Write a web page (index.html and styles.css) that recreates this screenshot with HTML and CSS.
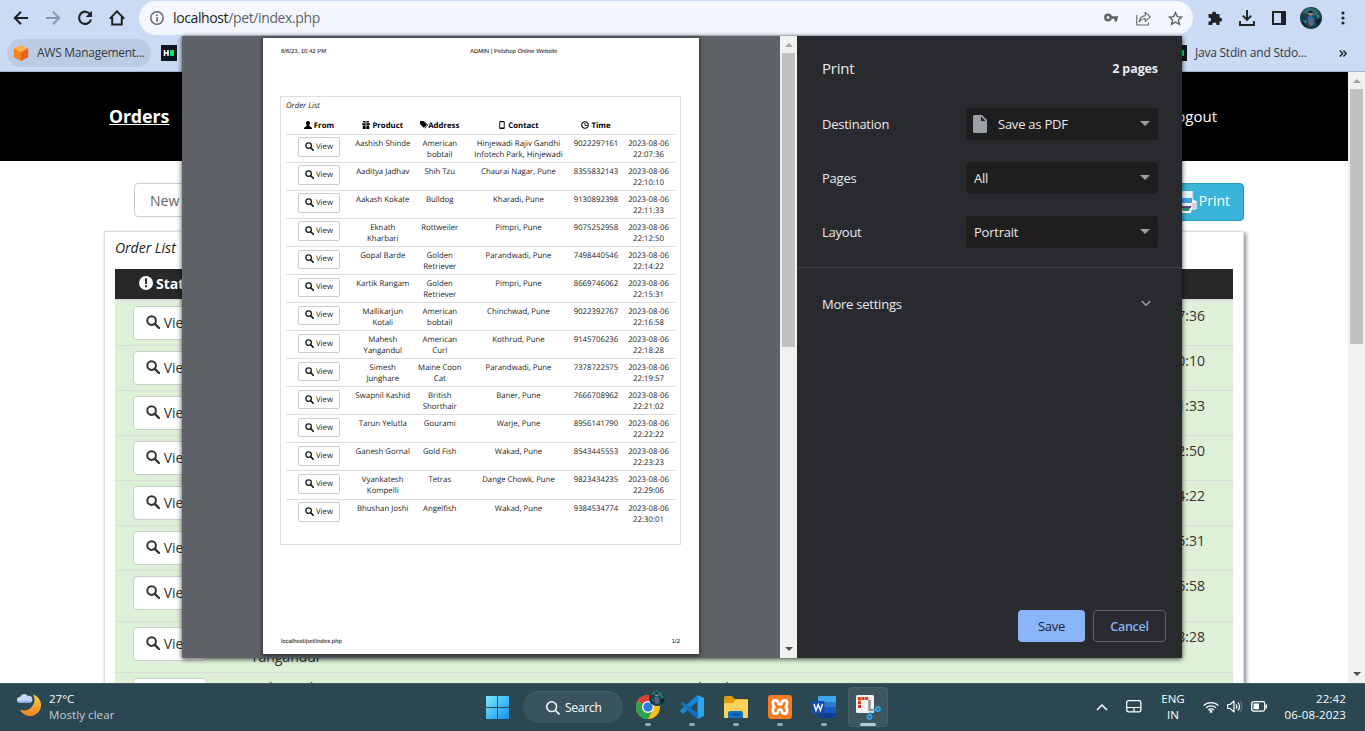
FILE: index.html
```html
<!DOCTYPE html>
<html lang="en">
<head>
<meta charset="utf-8">
<title>ADMIN | Petshop Online Website</title>
<link rel="stylesheet" href="styles.css">
</head>
<body>
<svg width="0" height="0" class="defs">
  <symbol id="mag" viewBox="0 0 14 14"><circle cx="5.6" cy="5.6" r="4.3" fill="none" stroke="currentColor" stroke-width="2"/><path d="M8.8 8.8l4.2 4.2" stroke="currentColor" stroke-width="2.4" stroke-linecap="round"/></symbol>
  <symbol id="avatar" viewBox="0 0 22 22"><circle cx="11" cy="11" r="11" fill="#173f49"/><path d="M2 6q5-6 9-5 6 1 8 5l-5 3-5-2z" fill="#2d6d72"/><path d="M2 15q3-3 5-1l-2 4zM16 6l4 3-3 3z" fill="#3d8583"/><circle cx="10.5" cy="6.5" r="2.400" fill="#a08273"/><path d="M8 5q2.500-3 5 0v1H8z" fill="#101d25"/><path d="M7.500 10l3-1.500 3.500 2 .5 8H8.500z" fill="#2a6fa3"/><path d="M9 11l2 8M14 12l-3 4" stroke="#b04b4e" stroke-width="1.100"/><path d="M1 14q4-1 5 6-4-2-5-6zM16 13l5-1q-1 5-4 7z" fill="#0b242c"/></symbol>
</svg>
<div class="screen">
  <header class="toolbar">
    <svg class="nav-ico" viewBox="0 0 16 16"><path d="M15 8H2M8 1.800L1.800 8 8 14.200" fill="none" stroke="#202124" stroke-width="2"/></svg>
    <svg class="nav-ico" viewBox="0 0 16 16"><path d="M1 8h13M8 1.800L14.200 8 8 14.200" fill="none" stroke="#8d97a8" stroke-width="2"/></svg>
    <svg class="nav-ico" viewBox="0 0 16 16"><path d="M13.300 4.500A6.100 6.100 0 1 0 14 9.500" fill="none" stroke="#202124" stroke-width="2.100"/><path d="M15 .8v6.300H8.700z" fill="#202124"/></svg>
    <svg class="nav-ico" viewBox="0 0 16 16"><path d="M3.200 7v7.600h9.600V7M.8 8.600L8 1.400l7.200 7.200" fill="none" stroke="#202124" stroke-width="2"/></svg>
    <div class="omnibox">
      <svg class="info" viewBox="0 0 14 14"><circle cx="7" cy="7" r="6.200" fill="none" stroke="#5f6368" stroke-width="1.400"/><path d="M7 6.200v4.300M7 3.400V5" stroke="#5f6368" stroke-width="1.600"/></svg>
      <span class="url">localhost<span>/pet/index.php</span></span>
      <svg class="key" viewBox="0 0 14 10"><circle cx="4" cy="4.500" r="2.700" fill="none" stroke="#5f6368" stroke-width="2.400"/><path d="M7 4.500h7M11.800 4.500v4" stroke="#5f6368" stroke-width="2.600"/></svg>
      <svg class="share" viewBox="0 0 15 15"><path d="M.8 4v10h11.700V11.500" fill="none" stroke="#5f6368" stroke-width="1.100"/><path d="M3.200 11c.3-4 2.500-6.100 6-6.300V1.300L14.300 5.800 9.200 10.300V7.500C6.500 7.500 4.700 8.700 3.200 11z" fill="none" stroke="#5f6368" stroke-width="1.100" stroke-linejoin="round"/></svg>
      <svg class="star" viewBox="0 0 15 15"><path d="M7.500 1.500l1.800 4.100 4.500.4-3.400 3 1 4.400-3.900-2.300-3.900 2.300 1-4.400-3.400-3 4.500-.4z" fill="none" stroke="#5f6368" stroke-width="1.400"/></svg>
    </div>
    <div class="actions">
      <svg width="16" height="16" viewBox="0 0 16 16"><path d="M1.500 4h3.700a2 2 0 1 1 3.800 0H12.500v3.700a2 2 0 1 1 0 3.800V15H9.300a2 2 0 1 0-3.900 0H1.500v-3.500a2 2 0 1 0 0-3.800z" fill="#202124"/></svg>
      <svg width="16" height="16" viewBox="0 0 16 16"><path d="M8 0v9M3.800 5.600L8 9.800l4.200-4.200M1 11v4h14v-4" fill="none" stroke="#202124" stroke-width="1.900"/></svg>
      <svg width="14" height="14" viewBox="0 0 14 14"><path d="M1 1h12v12H1z" fill="none" stroke="#202124" stroke-width="2"/><path d="M9 1h4v12H9z" fill="#202124"/></svg>
      <svg width="22" height="22"><use href="#avatar"/></svg>
      <svg width="4" height="14" viewBox="0 0 4 14"><g fill="#202124"><circle cx="2" cy="2" r="1.600"/><circle cx="2" cy="7" r="1.600"/><circle cx="2" cy="12" r="1.600"/></g></svg>
    </div>
  </header>
  <nav class="bookmarks">
    <div class="chip"><svg width="16" height="16" viewBox="0 0 16 16"><path d="M8 0l7.200 3.600L8 7.200.8 3.600z" fill="#ffab4c"/><path d="M.8 3.600L8 7.200V16L.8 12.300z" fill="#f7831c"/><path d="M15.200 3.600L8 7.200V16l7.200-3.700z" fill="#e8601b"/></svg><span>AWS Management...</span></div>
    <svg class="hr" viewBox="0 0 16 16"><path d="M0 0h16v16H0z" fill="#0e141e"/><path d="M3.500 5v6M7 5v6M3.500 8H7" stroke="#fff" stroke-width="1.600"/><path d="M9 5h4v6H9z" fill="#00ea64"/></svg>
    <svg class="hr hr-right" viewBox="0 0 16 16"><path d="M0 0h16v16H0z" fill="#0e141e"/><path d="M9 5h4v6H9z" fill="#00ea64"/></svg>
    <span class="java">Java Stdin and Stdo...</span>
    <svg class="more" viewBox="0 0 8 7"><path d="M.8.6l2.800 2.900L.8 6.400M4.400.6l2.800 2.900-2.800 2.900" fill="none" stroke="#202124" stroke-width="1.500"/></svg>
  </nav>

  <div class="viewport">
    <main class="site">
      <div class="site-nav"><b>Orders</b><span>Logout</span></div>
      <div class="tools">
        <div class="filter">New</div>
        <div class="print-btn"><svg width="24" height="24" viewBox="0 0 24 24"><path d="M5 1h15v9H5z" fill="#e8f2fb"/><path d="M20 1v9" stroke="#a9bfd6"/><path d="M6 8h13v5H6z" fill="#3b9df5"/><path d="M1 13h18V9l4 2q1 .5 1 2v5q0 1-1.500 1.500L19 20H1z" fill="#f3f3fb"/><path d="M19 13v7l4-1.500q1-.5 1-1.500v-4z" fill="#cfd0e6"/><path d="M5 16h13v3H5z" fill="#54467a"/><path d="M6 18h13l-1 5H7z" fill="#fff"/><path d="M9 18h8l-1 3h-6z" fill="#2e9278"/></svg><span>Print</span></div>
      </div>
      <section class="orders">
        <i>Order List</i>
        <div class="o-head"><svg width="14" height="14" viewBox="0 0 14 14"><circle cx="7" cy="7" r="7" fill="#fff"/><path d="M5.800 2.500h2.400L7.800 8H6.200zM6 9.200h2v2H6z" fill="#282828"/></svg>Status</div>
        <div class="o-row"><span><a class="btn"><svg><use href="#mag"/></svg>View</a></span><span>Aashish Shinde</span><span>American bobtail</span><span>Hinjewadi Rajiv Gandhi</span><span>9022297161</span><span>2023-08-06 22:07:36</span></div>
        <div class="o-row"><span><a class="btn"><svg><use href="#mag"/></svg>View</a></span><span>Aaditya Jadhav</span><span>Shih Tzu</span><span>Chaurai Nagar, Pune</span><span>8355832143</span><span>2023-08-06 22:10:10</span></div>
        <div class="o-row"><span><a class="btn"><svg><use href="#mag"/></svg>View</a></span><span>Aakash Kokate</span><span>Bulldog</span><span>Kharadi, Pune</span><span>9130892398</span><span>2023-08-06 22:11:33</span></div>
        <div class="o-row"><span><a class="btn"><svg><use href="#mag"/></svg>View</a></span><span>Eknath Kharbari</span><span>Rottweiler</span><span>Pimpri, Pune</span><span>9075252958</span><span>2023-08-06 22:12:50</span></div>
        <div class="o-row"><span><a class="btn"><svg><use href="#mag"/></svg>View</a></span><span>Gopal Barde</span><span>Golden Retriever</span><span>Parandwadi, Pune</span><span>7498440546</span><span>2023-08-06 22:14:22</span></div>
        <div class="o-row"><span><a class="btn"><svg><use href="#mag"/></svg>View</a></span><span>Kartik Rangam</span><span>Golden Retriever</span><span>Pimpri, Pune</span><span>8669746062</span><span>2023-08-06 22:15:31</span></div>
        <div class="o-row"><span><a class="btn"><svg><use href="#mag"/></svg>View</a></span><span>Mallikarjun<br>Kotali</span><span>American bobtail</span><span>Chinchwad, Pune</span><span>9022392767</span><span>2023-08-06 22:16:58</span></div>
        <div class="o-row"><span><a class="btn"><svg><use href="#mag"/></svg>View</a></span><span>Mahesh<br>Yangandul</span><span>American Curl</span><span>Kothrud, Pune</span><span>9145706236</span><span>2023-08-06 22:18:28</span></div>
        <div class="o-row"><span><a class="btn"><svg><use href="#mag"/></svg>View</a></span><span>Simesh Junghare</span><span>Maine Coon Cat</span><span>Parandwadi, Pune</span><span>7378722575</span><span>2023-08-06 22:19:57</span></div>
      </section>
    </main>
    <div class="scroll page-scroll"><i class="up"></i><b></b><i class="down"></i></div>
  </div>

  <footer class="taskbar">
    <div class="weather">
      <svg width="24" height="24" viewBox="0 0 24 24"><defs><linearGradient id="mg" x2="0" y2="1"><stop stop-color="#f8cf47"/><stop offset="1" stop-color="#ee8420"/></linearGradient></defs><path d="M16 1.500A11 11 0 1 1 3 16.500 10.500 10.500 0 0 0 16 1.500z" fill="url(#mg)"/><path d="M3 10a3 3 0 0 1 0-6 4.500 4.500 0 0 1 8-1 3.500 3.500 0 0 1 1.500 7z" fill="#c5d8fb"/><path d="M1 8h13q-1 2-2 2H3Q1 10 1 8z" fill="#8fabec"/></svg>
      <div>27°C<br><span>Mostly clear</span></div>
    </div>
    <div class="dock">
      <svg class="start" viewBox="0 0 23 23"><defs><linearGradient id="wg" x2="1" y2="1"><stop stop-color="#7be8fb"/><stop offset="1" stop-color="#1592f2"/></linearGradient></defs><path d="M0 0h11v11H0zM12 0h11v11H12zM0 12h11v11H0zM12 12h11v11H12z" fill="url(#wg)"/></svg>
      <div class="search"><svg width="14" height="14" viewBox="0 0 14 14"><circle cx="5.700" cy="5.700" r="4.900" fill="none" stroke="#fff" stroke-width="1.500"/><path d="M9.200 9.200l4.300 4.300" stroke="#fff" stroke-width="1.600"/></svg>Search</div>
      <div class="apps">
        <div class="app"><svg width="30" height="30" viewBox="0 0 30 30"><circle cx="12" cy="18" r="12" fill="#fbc116"/><path d="M12 18L1.600 12a12 12 0 0 1 20.800 0z" fill="#e33b2e"/><path d="M12 18L1.600 12A12 12 0 0 0 12 30l5-9z" fill="#30a350"/><circle cx="12" cy="18" r="6" fill="#fff"/><circle cx="12" cy="18" r="4.700" fill="#2b7de1"/><svg x="13" y="1" width="16" height="16" viewBox="0 0 22 22"><use href="#avatar" width="22" height="22"/></svg></svg></div>
        <div class="app"><svg width="24" height="24" viewBox="0 0 24 24"><path d="M17.500 0L24 3v18l-6.500 3z" fill="#2fa4ee"/><path d="M17.500 0v6.500L3 19 .4 17v-2z" fill="#1687d4"/><path d="M.4 9L3 6.500 17.500 18v6L.4 9z" fill="#0f72bd"/></svg></div>
        <div class="app"><svg width="24" height="24" viewBox="0 0 24 24"><path d="M0 2.500Q0 1 1.500 1H8l3 3h11.500Q24 4 24 5.500V12H0z" fill="#e09a10"/><path d="M0 8h9l3-3.500h12V22q0 1-1 1H1q-1 0-1-1z" fill="#fcd25a"/><path d="M4 23v-5q0-2 2-2h11q2 0 2 2v5z" fill="#1272c4"/><path d="M8 19.500h7" stroke="#074a86" stroke-width="1.500"/></svg></div>
        <div class="app"><svg width="24" height="24" viewBox="0 0 24 24"><rect width="24" height="24" rx="3" fill="#f57c23"/><g fill="none" stroke-linecap="round"><path d="M7.500 8Q7.500 12 12 12t4.500-4M7.500 16Q7.500 12 12 12t4.500 4" stroke="#fff" stroke-width="8"/><path d="M7.500 8Q8 12 12 12t4.500-4M7.500 16Q8 12 12 12t4.500 4" stroke="#f57c23" stroke-width="2.600"/></g></svg></div>
        <div class="app"><svg width="24" height="24" viewBox="0 0 24 24"><path d="M6 1h18v6H6z" fill="#41a5ee"/><path d="M6 7h18v5.500H6z" fill="#2b7cd3"/><path d="M6 12.500h18V18H6z" fill="#185abd"/><path d="M6 18h18v5H6z" fill="#103f91"/><rect y="6" width="12.500" height="12.500" rx="1" fill="#164fa8"/><path d="M2 9l2 6.500L6.200 9.500l2.200 6L10.500 9" fill="none" stroke="#fff" stroke-width="1.400"/></svg></div>
        <div class="app active"><svg width="26" height="26" viewBox="0 0 26 26"><rect x="1" y="1" width="18" height="18" rx="1.500" fill="#f4f2f1"/><path d="M4.500 14V4.500H14" fill="none" stroke="#d83b13" stroke-width="3" stroke-dasharray="3 .8"/><path d="M14.500 6v10h6" fill="none" stroke="#8c9296" stroke-width="2.400"/><g fill="none" stroke="#2ba3e6" stroke-width="1.800"><circle cx="23" cy="15" r="2"/><circle cx="14.500" cy="23" r="2"/><path d="M19 16.500l2.500-.7M15 21l.5-3"/></g></svg></div>
      </div>
    </div>
    <div class="tray">
      <svg width="12" height="8" viewBox="0 0 12 8"><path d="M1 7l5-5 5 5" fill="none" stroke="#fff" stroke-width="1.500"/></svg>
      <svg class="pad" width="16" height="13" viewBox="0 0 16 13"><rect x=".7" y=".7" width="14.200" height="11.200" rx="1.800" fill="none" stroke="#fff" stroke-width="1.300"/><path d="M1 7.500h14M8 7.500V12" stroke="#fff" stroke-width="1.200"/></svg>
      <div class="lang">ENG<br>IN</div>
      <svg class="wifi" width="16" height="12" viewBox="0 0 16 12"><g fill="none" stroke="#fff" stroke-width="1.200"><path d="M.6 4.600a10.500 10.500 0 0 1 14.800 0M2.900 6.900a7.200 7.200 0 0 1 10.200 0M5.100 9.100a4 4 0 0 1 5.800 0"/></g><circle cx="8" cy="10.500" r="1.400" fill="#fff"/></svg>
      <svg class="vol" width="16" height="13" viewBox="0 0 16 13"><path d="M.7 4.500h2.500L7 1v11L3.200 8.500H.7z" fill="none" stroke="#fff" stroke-width="1.200" stroke-linejoin="round"/><path d="M9 4.300q1.600 2.200 0 4.400M11 2.500q3 4 0 8" fill="none" stroke="#fff" stroke-width="1.200"/><path d="M13 1q4 5.500 0 11" fill="none" stroke="#6b8089"/></svg>
      <svg class="bat" width="17" height="11" viewBox="0 0 17 11"><rect x=".7" y=".7" width="13" height="9.400" rx="1.800" fill="none" stroke="#fff" stroke-width="1.300"/><path d="M2.500 2.500H8v5.800H2.500zM14.500 3.500h1.600v4h-1.600z" fill="#fff"/></svg>
      <div class="clock">22:42<br>06-08-2023</div>
    </div>
  </footer>

  <div class="dialog">
    <div class="preview">
      <div class="paper">
        <div class="p-top"><span>8/6/23, 10:42 PM</span><span>ADMIN | Petshop Online Website</span></div>
        <div class="p-box">
          <i>Order List</i>
          <div class="p-row p-head">
            <span><svg viewBox="0 0 9 9"><path d="M4.500 0c3 0 2.500 4 1.300 5 .2 1.300 3.200 1 3.200 4H0c0-3 3-2.700 3.200-4C2 4 1.500 0 4.500 0z"/></svg> From</span>
            <span><svg viewBox="0 0 9 9"><path d="M.3 2.500h3.800v2H.3zM4.900 2.500h3.800v2H4.900zM.8 5.200h3.300V9H.8zM4.900 5.200h3.300V9H4.900zM1.200 0h2.300l1 1.200L5.500 0h2.300v1.800H1.200z"/></svg> Product</span>
            <span><svg viewBox="0 0 9 9"><path d="M0 0h3.500l4 4.300-3.300 3.400L0 3.500zM4.500 0L9 4.500 5.500 8.300l-.6-.5L8 4.500 3.800 0z"/></svg>Address</span>
            <span><svg viewBox="0 0 9 9"><path d="M2.500 0h4q1 0 1 1v7q0 1-1 1h-4q-1 0-1-1V1q0-1 1-1zm0 1.500v5.800h4V1.500z" fill-rule="evenodd"/></svg> Contact</span>
            <span><svg viewBox="0 0 9 9"><circle cx="4.500" cy="4.500" r="3.700" fill="none" stroke="#000" stroke-width="1.300"/><path d="M4.500 2v3H7" fill="none" stroke="#000"/></svg> Time</span>
          </div>
          <div class="p-row"><span><a><svg><use href="#mag"/></svg>View</a></span><span>Aashish Shinde</span><span>American<br>bobtail</span><span>Hinjewadi Rajiv Gandhi<br>Infotech Park, Hinjewadi</span><span>9022297161</span><span>2023-08-06<br>22:07:36</span></div>
          <div class="p-row"><span><a><svg><use href="#mag"/></svg>View</a></span><span>Aaditya Jadhav</span><span>Shih Tzu</span><span>Chaurai Nagar, Pune</span><span>8355832143</span><span>2023-08-06<br>22:10:10</span></div>
          <div class="p-row"><span><a><svg><use href="#mag"/></svg>View</a></span><span>Aakash Kokate</span><span>Bulldog</span><span>Kharadi, Pune</span><span>9130892398</span><span>2023-08-06<br>22:11:33</span></div>
          <div class="p-row"><span><a><svg><use href="#mag"/></svg>View</a></span><span>Eknath<br>Kharbari</span><span>Rottweiler</span><span>Pimpri, Pune</span><span>9075252958</span><span>2023-08-06<br>22:12:50</span></div>
          <div class="p-row"><span><a><svg><use href="#mag"/></svg>View</a></span><span>Gopal Barde</span><span>Golden<br>Retriever</span><span>Parandwadi, Pune</span><span>7498440546</span><span>2023-08-06<br>22:14:22</span></div>
          <div class="p-row"><span><a><svg><use href="#mag"/></svg>View</a></span><span>Kartik Rangam</span><span>Golden<br>Retriever</span><span>Pimpri, Pune</span><span>8669746062</span><span>2023-08-06<br>22:15:31</span></div>
          <div class="p-row"><span><a><svg><use href="#mag"/></svg>View</a></span><span>Mallikarjun<br>Kotali</span><span>American<br>bobtail</span><span>Chinchwad, Pune</span><span>9022392767</span><span>2023-08-06<br>22:16:58</span></div>
          <div class="p-row"><span><a><svg><use href="#mag"/></svg>View</a></span><span>Mahesh<br>Yangandul</span><span>American<br>Curl</span><span>Kothrud, Pune</span><span>9145706236</span><span>2023-08-06<br>22:18:28</span></div>
          <div class="p-row"><span><a><svg><use href="#mag"/></svg>View</a></span><span>Simesh<br>Junghare</span><span>Maine Coon<br>Cat</span><span>Parandwadi, Pune</span><span>7378722575</span><span>2023-08-06<br>22:19:57</span></div>
          <div class="p-row"><span><a><svg><use href="#mag"/></svg>View</a></span><span>Swapnil Kashid</span><span>British<br>Shorthair</span><span>Baner, Pune</span><span>7666708962</span><span>2023-08-06<br>22:21:02</span></div>
          <div class="p-row"><span><a><svg><use href="#mag"/></svg>View</a></span><span>Tarun Yelutla</span><span>Gourami</span><span>Warje, Pune</span><span>8956141790</span><span>2023-08-06<br>22:22:22</span></div>
          <div class="p-row"><span><a><svg><use href="#mag"/></svg>View</a></span><span>Ganesh Gornal</span><span>Gold Fish</span><span>Wakad, Pune</span><span>8543445553</span><span>2023-08-06<br>22:23:23</span></div>
          <div class="p-row"><span><a><svg><use href="#mag"/></svg>View</a></span><span>Vyankatesh<br>Kompelli</span><span>Tetras</span><span>Dange Chowk, Pune</span><span>9823434235</span><span>2023-08-06<br>22:29:06</span></div>
          <div class="p-row"><span><a><svg><use href="#mag"/></svg>View</a></span><span>Bhushan Joshi</span><span>Angelfish</span><span>Wakad, Pune</span><span>9384534774</span><span>2023-08-06<br>22:30:01</span></div>
        </div>
        <div class="p-foot"><span>localhost/pet/index.php</span><span>1/2</span></div>
      </div>
      <div class="scroll prev-scroll"><i class="up"></i><b></b><i class="down"></i></div>
    </div>
    <aside class="panel">
      <div class="title"><h1>Print</h1><b>2 pages</b></div>
      <div class="field"><label>Destination</label><div class="select"><svg width="14" height="18" viewBox="0 0 14 18"><path d="M1.500 0H9l5 5v11.500q0 1.500-1.500 1.500h-11Q0 18 0 16.500v-15Q0 0 1.500 0zM8 1.500V6h4.500z" fill="#9aa0a6" fill-rule="evenodd"/></svg>Save as PDF<i></i></div></div>
      <div class="field"><label>Pages</label><div class="select">All<i></i></div></div>
      <div class="field"><label>Layout</label><div class="select">Portrait<i></i></div></div>
      <div class="settings"><span>More settings</span><svg width="10" height="7" viewBox="0 0 10 7"><path d="M.8 1L5 5.200 9.200 1" fill="none" stroke="#9aa0a6" stroke-width="1.600"/></svg></div>
      <div class="buttons"><div class="save">Save</div><div class="cancel">Cancel</div></div>
    </aside>
  </div>
</div>
</body>
</html>
```
FILE: styles.css
```css
* { box-sizing: border-box; }
body { margin: 0; background: #fff; font-family: "Open Sans", "Noto Sans", sans-serif; }
svg { display: block; flex: none; }
.defs { position: absolute; }
.screen { position: relative; width: 1365px; height: 731px; overflow: hidden; display: flex; flex-direction: column; }

/* browser chrome */
.toolbar { height: 36px; background: #cbdbf5; display: flex; align-items: center; padding-left: 13px; }
.nav-ico { width: 16px; height: 16px; margin-right: 16px; }
.omnibox { width: 1054px; height: 34px; border-radius: 17px; background: #f4f8fe; margin-left: -2px; display: flex; align-items: center; padding: 0 10px 0 11px; }
.info { width: 14px; height: 14px; margin-right: 9px; }
.url { font-size: 14px; color: #202124; letter-spacing: -.38px; padding-bottom: 1px; }
.url span { color: #5f6368; }
.key { width: 14px; height: 10px; margin-left: auto; }
.share { width: 15px; height: 15px; margin-left: 18px; }
.star { width: 15px; height: 15px; margin-left: 17px; }
.actions { display: flex; align-items: center; margin-left: 14px; }
.actions svg + svg { margin-left: 16px; }
.actions svg:nth-child(3) { margin-left: 17px; }
.actions svg:nth-child(4) { margin-left: 14px; }
.actions svg:nth-child(5) { margin-left: 19px; }
.bookmarks { height: 36px; background: #cbdbf5; border-bottom: 1px solid #a6b3cb; display: flex; align-items: center; padding: 0 18px 1px 7px; font-size: 12px; color: #35383d; }
.chip { width: 144px; height: 28px; border-radius: 14px; background: #bccbe4; display: flex; align-items: center; gap: 8px; padding-left: 6px; white-space: nowrap; }
.chip span { letter-spacing: -.27px; padding-bottom: 1px; }
.hr { width: 16px; height: 16px; margin-left: 10px; }
.hr-right { margin-left: 994px; }
.java { margin-left: 8px; white-space: nowrap; letter-spacing: -.23px; padding-bottom: 1px; }
.more { width: 8px; height: 7px; margin-left: auto; }

/* web page */
.viewport { height: 611px; display: flex; background: #fff; }
.site { width: 1348px; height: 611px; overflow: hidden; }
.site-nav { height: 89px; background: #000; color: #fff; display: flex; align-items: center; justify-content: space-between; padding: 0 131px 2px 109px; }
.site-nav b { font: bold 17.8px "Noto Sans", sans-serif; text-decoration: underline; }
.site-nav span { font-size: 15px; font-weight: 500; }
.tools { display: flex; justify-content: space-between; align-items: flex-start; padding: 22px 104px 0 134px; height: 70px; }
.filter { width: 300px; height: 34px; border: 1px solid #ccc; border-radius: 4px; padding: 6px 15px; font-size: 14px; line-height: 22px; color: #666; }
.print-btn { height: 38px; border: 1px solid #269abc; border-radius: 4px; background: #39b3d7; color: #fff; font-size: 14px; display: flex; align-items: center; gap: 2px; padding: 0 13px 0 12px; }
.print-btn span { padding-bottom: 3px; }
.print-btn svg { margin-bottom: 1px; }
.orders { width: 1140px; height: 600px; margin-left: 104px; border: 1px solid #ddd; box-shadow: 2px 2px 4px #888; padding: 6px 10px; font-size: 14px; color: #333; }
.orders > i { display: block; height: 31px; line-height: 20px; color: #222; }
.o-head { height: 30px; background: #282828; color: #fff; font-weight: bold; display: flex; align-items: center; gap: 3px; padding: 0 0 2px 24px; }
.o-row { display: grid; grid-template-columns: 110px 120px 168px 402px 130px 188px; text-align: center; line-height: 20px; background: #dff0d8; border-top: 1px solid #ddd; padding: 5px 0; min-height: 45px; }
.o-head + .o-row { border-top: 2px solid #ddd; min-height: 46px; }
.o-row > span { height: fit-content; min-height: 34px; }
.btn { width: 74px; height: 34px; margin: 0 auto; display: flex; align-items: center; justify-content: center; gap: 4px; background: #fff; border: 1px solid #ccc; border-radius: 4px; }
.btn svg { width: 14px; height: 14px; margin-bottom: 2px; }

/* scrollbars */
.scroll { width: 17px; background: #f1f1f1; display: flex; flex-direction: column; align-items: center; }
.scroll i { width: 0; height: 0; border: 4px solid transparent; }
.scroll .up { border-bottom-color: #a3a3a3; margin-top: 3px; }
.scroll .down { border-top-color: #505050; margin: auto 0 2px; }
.scroll b { width: 13px; background: #c1c1c1; }
.page-scroll b { height: 255px; margin-top: 6px; }
.page-scroll .down { margin-bottom: 3px; }

/* print dialog floats over the window */
.dialog { position: absolute; left: 182px; top: 36px; width: 1000px; height: 622px; display: flex; background: #292a2d; box-shadow: 0 1px 5px rgba(0,0,0,.75); }
.preview { width: 615px; display: flex; background: #5f6367; padding: 2px 0 0 81px; }
.paper { width: 436px; height: 616px; background: #fff; box-shadow: 0 1px 4px 1px rgba(0,0,0,.55); padding: 0 18px 0 17px; text-rendering: geometricPrecision; }
.p-top { height: 58px; padding: 9px 1px 0; display: flex; font: 5.95px/10px "Liberation Sans", sans-serif; color: #000; white-space: nowrap; }
.p-top span:first-child { width: 189px; }
.p-box { height: 449px; border: 1px solid #ddd; padding: 2.5px 5px; font-size: 7.8px; line-height: 11px; color: #1c1c1c; }
.p-box > i { display: block; height: 13px; line-height: 12.500px; }
.p-row { display: grid; grid-template-columns: 66px 61.5px 52.5px 105px 50px 55px; height: 28.08px; border-top: 1px solid #ddd; padding-top: 4px; text-align: center; white-space: nowrap; }
.p-row > span { display: flex; flex-direction: column; align-items: center; }
.p-head { height: 21px; border: 0; padding-top: 8px; font-weight: bold; color: #000; }
.p-head > span { display: flex; flex-direction: row; justify-content: center; align-items: center; gap: 2px; height: 11px; }
.p-head > span:nth-child(3) { gap: 0; }
.p-head svg { width: 8px; height: 8px; margin-bottom: 2.500px; }
.p-row a { width: 42px; height: 19.5px; margin-top: -1.300px; border: 1px solid #ccc; border-radius: 2px; display: flex; align-items: center; justify-content: center; gap: 2px; padding-top: 1px; }
.p-row a svg { width: 9px; height: 9px; margin-bottom: 2px; }
.p-foot { height: 109px; padding: 92px 1px 0 1px; display: flex; justify-content: space-between; font: 5.95px/10px "Liberation Sans", sans-serif; color: #000; }
.prev-scroll { margin: -2px 0 0 81px; height: 622px; }
.prev-scroll b { height: 294px; margin-top: 6px; }
.prev-scroll .down { margin-bottom: 3px; }

.panel { width: 385px; display: flex; flex-direction: column; color: #e8eaed; font-size: 13px; letter-spacing: -.24px; }
.title { height: 72px; display: flex; justify-content: space-between; padding: 22px 24px 0 25px; line-height: 20px; }
.title h1 { margin: 0; font-size: 15px; line-height: 20px; font-weight: 400; }
.title b { font-weight: 700; font-size: 12.5px; line-height: 22px; letter-spacing: -.1px; }
.field { height: 32px; margin-bottom: 22px; display: flex; align-items: center; justify-content: space-between; padding: 0 24px 0 25px; }
.select { width: 192px; height: 32px; border-radius: 4px; background: #1e1e1f; display: flex; align-items: center; padding: 0 8px; }
.select svg { margin-right: 11px; margin-left: -1px; }
.select i { margin-left: auto; border: 5px solid transparent; border-top-color: #9aa0a6; border-bottom: 0; margin-bottom: 2px; }
.settings { border-top: 1px solid #3f4043; margin-top: -3px; height: 74px; display: flex; align-items: center; justify-content: space-between; padding: 0 31px 2px 25px; }
.buttons { margin-top: auto; display: flex; justify-content: flex-end; gap: 8px; padding: 0 16px 16px; }
.save, .cancel { height: 32px; border-radius: 4px; line-height: 32px; text-align: center; font-weight: 500; }
.save { width: 67px; background: #8ab4f8; color: #202124; }
.cancel { width: 73px; border: 1px solid #5f6368; line-height: 31px; color: #8ab4f8; font-weight: 600; font-size: 12.5px; }

/* taskbar */
.taskbar { height: 48px; background: #2a4752; border-top: 1px solid #415a64; display: flex; color: #fff; font-size: 11.5px; line-height: 16px; }
.weather { width: 486px; padding: 7px 0 0 17px; display: flex; gap: 8px; }
.weather svg { margin-top: 2px; }
.weather span { color: #c8d1d4; letter-spacing: .08px; }
.dock { display: flex; align-items: flex-start; }
.start { width: 23px; height: 23px; margin: 12px 14px 0 0; }
.search { width: 100px; height: 32px; margin-top: 7px; border-radius: 16px; background: #3a545f; display: flex; align-items: center; gap: 5px; padding-left: 23px; border-top: 1px solid #48616b; font-size: 12px; letter-spacing: -.25px; }
.apps { display: flex; gap: 4px; margin: 3px 0 0 5px; }
.app { width: 40px; height: 40px; display: flex; flex-direction: column; align-items: center; justify-content: flex-end; padding-bottom: 1px; border-radius: 4px; }
.app > svg { margin-bottom: 4px; }
.app:first-child > svg { margin-left: 6px; }
.app::after { content: ""; width: 6px; height: 3px; border-radius: 2px; background: #9aa7ad; }
.active { background: #3c555f; border: 1px solid #48616b; padding-bottom: 0; }
.active::after { width: 16px; background: #a9ced8; }
.active > svg { margin-bottom: 3px; }
.tray { margin-left: auto; display: flex; align-items: center; padding: 0 19px 2px 0; }
.pad { margin-left: 18px; }
.lang { width: 30px; margin-left: 16px; text-align: center; }
.wifi { margin-left: 15px; }
.vol { margin-left: 8px; }
.bat { margin-left: 8px; }
.clock { width: 78px; text-align: right; font-size: 11.5px; letter-spacing: .15px; }
```
